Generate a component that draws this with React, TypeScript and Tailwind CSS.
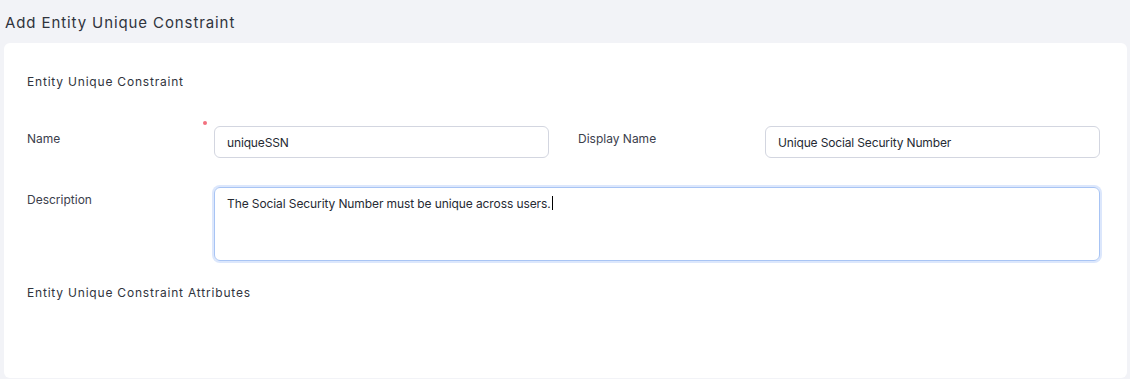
import React from "react";

// ─── Field pieces ─────────────────────────────────────────────────────────────

function Label({ children, required }: { children: React.ReactNode; required?: boolean }) {
  return (
    <div className="relative w-[187px] shrink-0 pt-[5px] text-[12px] leading-4 text-[#3b404c]">
      {children}
      {required && (
        <span className="absolute right-[7px] top-[-5px] h-[4px] w-[4px] rounded-full bg-[#f2717f]" />
      )}
    </div>
  );
}

function TextInput({ value }: { value: string }) {
  return (
    <input
      readOnly
      value={value}
      className="h-[32px] w-[335px] rounded-[6px] border border-[#d3d6e0] bg-white px-3 text-[12px] tracking-[-0.15px] text-[#262a33] outline-none"
    />
  );
}

// ─── Page ─────────────────────────────────────────────────────────────────────

export default function App() {
  return (
    <div className="h-[379px] w-[1130px] overflow-hidden bg-[#f2f3f7] font-['Inter',sans-serif]">
      <div className="px-[5px] pt-[13px] pb-[10px] text-[15px] leading-5 tracking-[0.9px] text-[#30343d]">
        Add Entity Unique Constraint
      </div>

      <div className="ml-[4px] mr-[3px] h-[335px] rounded-[6px] bg-white pl-[23px] pr-[27px] pt-[31px]">
        <div className="text-[12px] leading-4 tracking-[0.8px] text-[#30343d]">Entity Unique Constraint</div>

        {/* Name / Display Name */}
        <div className="mt-[36px] flex items-start gap-[29px]">
          <div className="flex items-start">
            <Label required>Name</Label>
            <TextInput value="uniqueSSN" />
          </div>
          <div className="flex items-start">
            <Label>Display Name</Label>
            <TextInput value="Unique Social Security Number" />
          </div>
        </div>

        {/* Description — focused textarea */}
        <div className="mt-[29px] flex items-start">
          <Label>Description</Label>
          <div className="h-[74px] flex-1 rounded-[6px] border border-[#a8c4f4] px-3 pt-[6px] text-[12px] leading-4 tracking-[-0.1px] text-[#262a33] ring-2 ring-[#dce7fc]">
            The Social Security Number must be unique across users.
            <span className="ml-px inline-block h-[14px] w-px translate-y-[2px] bg-black" />
          </div>
        </div>

        <div className="mt-[24px] text-[12px] leading-4 tracking-[0.8px] text-[#30343d]">
          Entity Unique Constraint Attributes
        </div>
      </div>
    </div>
  );
}
